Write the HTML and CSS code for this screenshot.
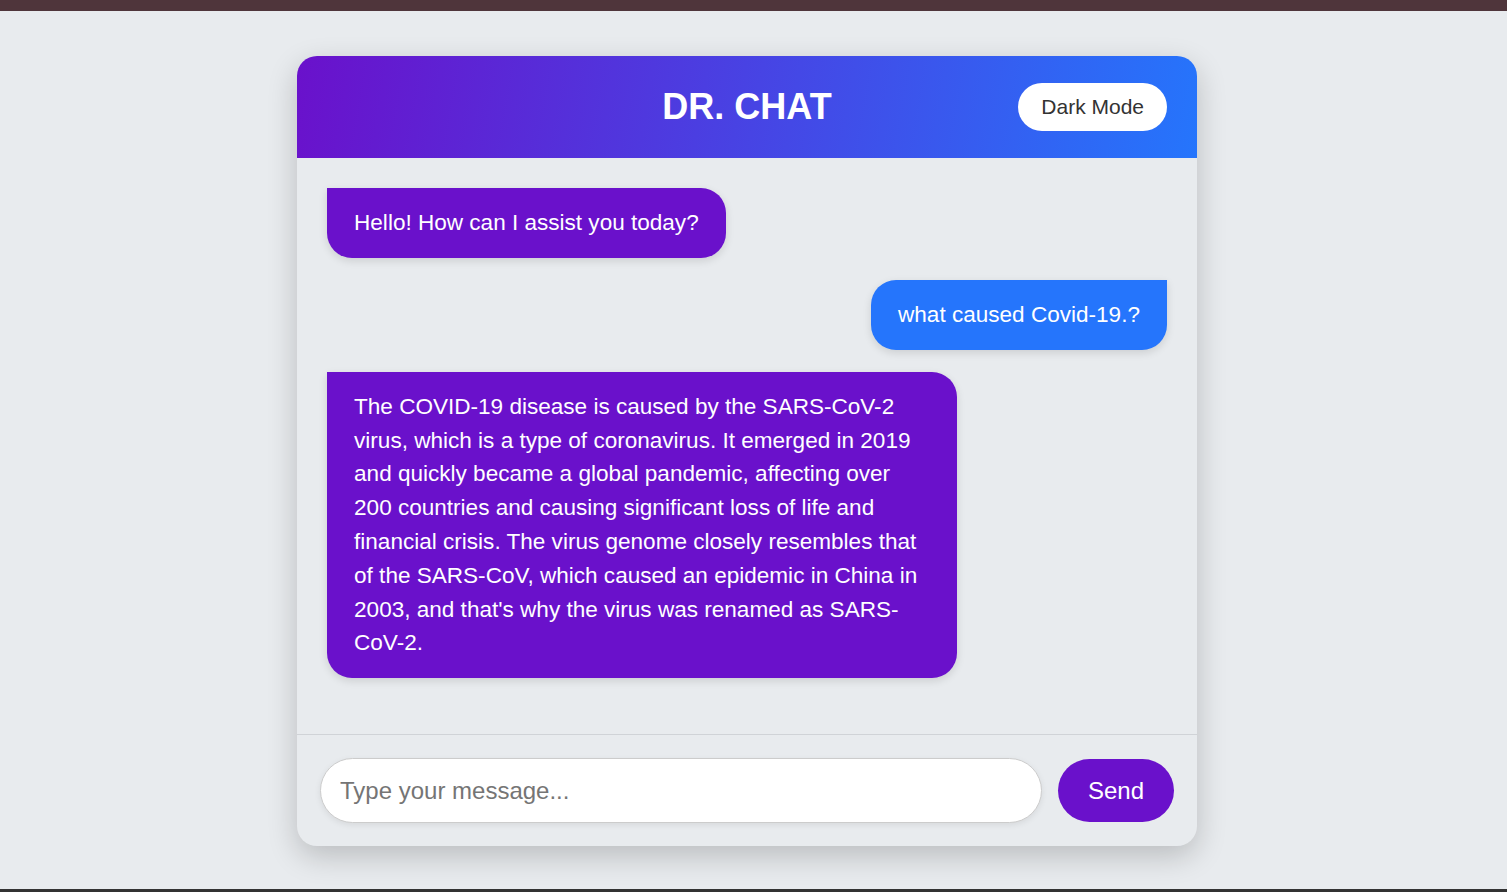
FILE: index.html
```html
<!DOCTYPE html>
<html lang="en">
<head>
<meta charset="utf-8">
<title>DR. CHAT</title>
<link rel="stylesheet" href="styles.css">
</head>
<body>
<div class="top-bar"></div>
<main class="page">
  <section class="chat">
    <header class="chat-header">
      <span class="spacer"></span>
      <h1 class="title">DR. CHAT</h1>
      <button class="mode-btn" type="button">Dark Mode</button>
    </header>
    <div class="messages">
      <div class="msg bot">Hello! How can I assist you today?</div>
      <div class="msg user">what caused Covid-19.?</div>
      <div class="msg bot">The COVID-19 disease is caused by the SARS-CoV-2 virus, which is a type of coronavirus. It emerged in 2019 and quickly became a global pandemic, affecting over 200 countries and causing significant loss of life and financial crisis. The virus genome closely resembles that of the SARS-CoV, which caused an epidemic in China in 2003, and that's why the virus was renamed as SARS-CoV-2.</div>
    </div>
    <form class="composer">
      <input class="composer-input" type="text" placeholder="Type your message...">
      <button class="send-btn" type="button">Send</button>
    </form>
  </section>
</main>
<div class="bottom-bar"></div>
</body>
</html>
```
FILE: styles.css
```css
* { box-sizing: border-box; }
html, body { margin: 0; padding: 0; }
body {
  background: #e8ebee;
  font-family: "Liberation Sans", Arial, sans-serif;
  height: 892px;
  display: flex;
  flex-direction: column;
  overflow: hidden;
}
.top-bar { height: 11px; background: #4f353b; flex: none; }
.bottom-bar { height: 3px; background: #333333; flex: none; }
.page {
  flex: 1;
  display: flex;
  justify-content: center;
  align-items: flex-start;
  padding: 45px 13px 0 0;
}
.chat {
  width: 900px;
  height: 790px;
  background: #e8ebee;
  border-radius: 20px;
  box-shadow: 0 10px 30px rgba(0, 0, 0, 0.2);
  display: flex;
  flex-direction: column;
  overflow: hidden;
}
.chat-header {
  height: 102px;
  flex: none;
  background: linear-gradient(100deg, #6a11cb 0%, #2575fc 100%);
  display: grid;
  grid-template-columns: 1fr auto 1fr;
  align-items: center;
  padding: 0 30px;
}
.title {
  margin: 0;
  color: #fff;
  font-size: 36px;
  font-weight: bold;
  line-height: 40px;
}
.mode-btn {
  justify-self: end;
  background: #fff;
  color: #333;
  border: none;
  border-radius: 24px;
  font-family: inherit;
  font-size: 21px;
  line-height: 24px;
  padding: 12px 23px;
  height: 48px;
}
.messages {
  height: 576px;
  flex: none;
  padding: 30px;
  display: flex;
  flex-direction: column;
  gap: 22px;
  align-items: flex-start;
}
.msg {
  max-width: 75%;
  font-size: 22.55px;
  line-height: 1.5;
  padding: 0.8em 1.2em;
  color: #fff;
  border-radius: 25px;
  box-shadow: 0 3px 8px rgba(0, 0, 0, 0.12);
}
.msg.bot { background: #6a11cb; border-top-left-radius: 0; }
.msg.user { background: #2575fc; border-top-right-radius: 0; align-self: flex-end; }
.composer {
  margin: 0;
  flex: 1;
  border-top: 1px solid #d0d3d7;
  display: flex;
  align-items: center;
  gap: 16px;
  padding: 0 23px;
}
.composer-input {
  flex: 1;
  height: 65px;
  border: 1px solid #cccccc;
  border-radius: 33px;
  background: #fff;
  font-family: inherit;
  font-size: 24px;
  padding: 0 19px;
  color: #333;
  box-shadow: 0 2px 6px rgba(0, 0, 0, 0.08);
  outline: none;
}
.composer-input::placeholder { color: #757575; }
.send-btn {
  width: 116px;
  height: 63px;
  border: none;
  border-radius: 32px;
  background: #6a11cb;
  color: #fff;
  font-family: inherit;
  font-size: 24px;
}
```
